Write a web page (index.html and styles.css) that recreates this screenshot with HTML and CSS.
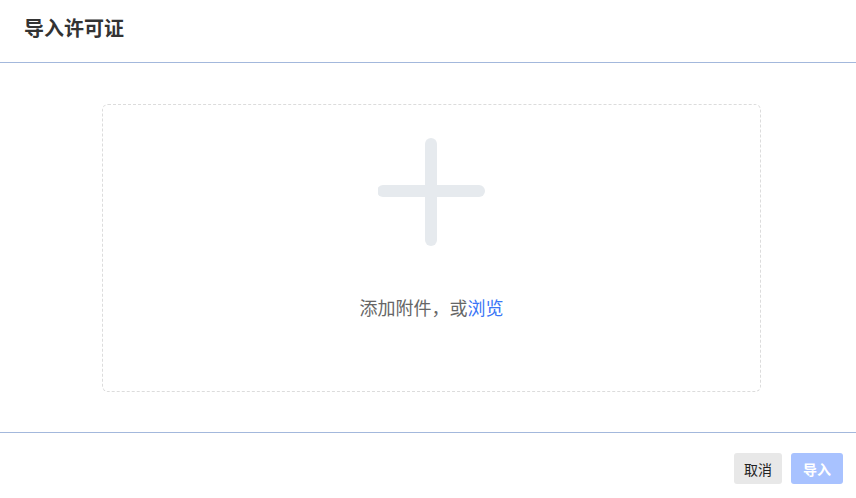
FILE: index.html
```html
<!DOCTYPE html>
<html lang="zh-CN">
<head>
  <meta charset="UTF-8" />
  <title>导入许可证</title>
  <link rel="stylesheet" href="styles.css">
</head>
<body>
  <div class="dialog">
    <header class="dialog-head">
      <h1>导入许可证</h1>
    </header>
    <main class="dialog-body">
      <div class="drop-zone">
        <svg class="plus" width="108" height="108" viewBox="0 0 108 108">
          <line x1="53" y1="6" x2="53" y2="102" stroke="#e6eaee" stroke-width="12" stroke-linecap="round"/>
          <line x1="5" y1="53" x2="101" y2="53" stroke="#e6eaee" stroke-width="12" stroke-linecap="round"/>
        </svg>
        <p class="hint">添加附件，或<a href="#">浏览</a></p>
      </div>
    </main>
    <footer class="dialog-foot">
      <button class="btn btn-cancel">取消</button>
      <button class="btn btn-primary" disabled>导入</button>
    </footer>
  </div>
</body>
</html>
```

FILE: styles.css
```css
body {
  margin: 0;
  font-family: "Noto Sans CJK SC", "Liberation Sans", sans-serif;
  background: #fff;
  color: #333;
}
.dialog-head {
  height: 62px;
  border-bottom: 1px solid #a3b8dc;
  box-sizing: content-box;
  display: flex;
  align-items: center;
  padding-left: 24px;
}
.dialog-head h1 {
  margin: 0;
  font-size: 20px;
  font-weight: bold;
  color: #333;
  line-height: 24px;
  margin-top: -6px;
}
.dialog-body {
  padding: 41px 0 40px 102px;
  border-bottom: 1px solid #a3b8dc;
}
.drop-zone {
  width: 657px;
  height: 286px;
  border: 1px dashed #dcdcdc;
  border-radius: 6px;
  display: flex;
  flex-direction: column;
  align-items: center;
}
.plus {
  margin-top: 33px;
}
.hint {
  margin: 49px 0 0;
  font-size: 18px;
  line-height: 24px;
  color: #666;
}
.hint a {
  color: #3a76f6;
  text-decoration: none;
}
.dialog-foot {
  display: flex;
  justify-content: flex-end;
  gap: 9px;
  padding: 20px 13px 0 0;
}
.btn {
  height: 31px;
  padding: 0 10px;
  border: none;
  border-radius: 3px;
  font-family: inherit;
  font-size: 14px;
}
.btn-cancel {
  background: #e8e8e8;
  color: #222;
}
.btn-primary {
  background: #a8c2ff;
  color: #fff;
  font-weight: bold;
  width: 52px;
}
```
